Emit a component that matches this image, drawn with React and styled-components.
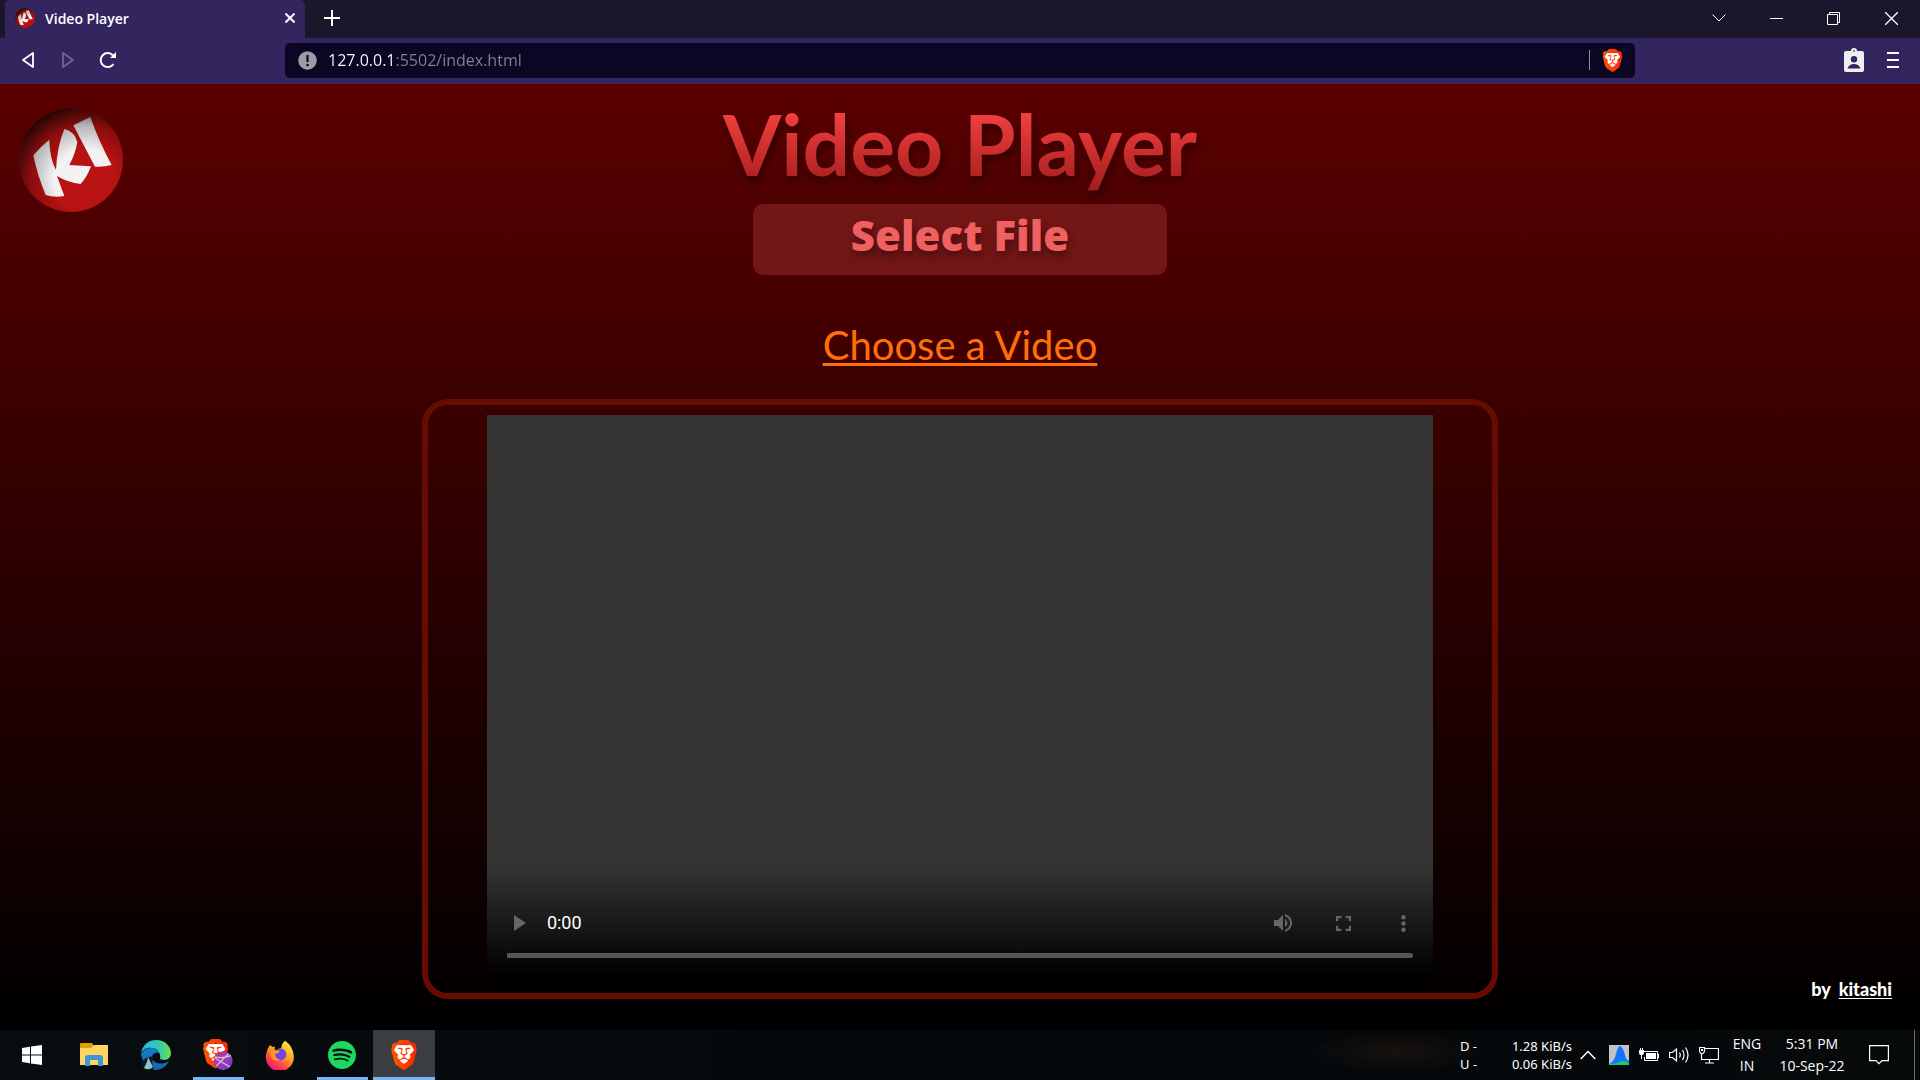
import React, { useRef } from "react";
import styled, { createGlobalStyle } from "styled-components";
import { SiBrave, SiSpotify } from "react-icons/si";

const ui = `"Open Sans", "Noto Sans", sans-serif`;

const GlobalStyle = createGlobalStyle`
  *, *::before, *::after { box-sizing: border-box; }
  body { margin: 0; background: #000; font-family: ${ui}; color: #fff; }
  button, input { font: inherit; color: inherit; border: 0; padding: 0; margin: 0; background: none; }
  svg { display: block; }
`;

const Shell = styled.div`
  display: flex;
  flex-direction: column;
  min-height: 100vh;
`;

/* Browser chrome */
const TabStrip = styled.div`
  display: flex;
  height: 38px;
  padding-left: 5px;
  background: #1a172d;
`;
const Tab = styled.div`
  display: flex;
  align-items: center;
  gap: 10px;
  width: 300px;
  padding: 0 8px 2px 10px;
  border-radius: 5px 5px 0 0;
  background: #33265f;
  font-size: 14px;
  font-weight: 600;
`;
const TabTitle = styled.span`
  flex: 1;
  white-space: nowrap;
`;
const IconButton = styled.button`
  display: flex;
  align-items: center;
  justify-content: center;
  width: ${(p) => p.$w}px;
  height: ${(p) => p.$h || 36}px;
`;
const WindowControls = styled.div`
  display: flex;
  margin-left: auto;
`;
const Toolbar = styled.div`
  display: flex;
  align-items: center;
  height: 46px;
  padding: 0 8px 2px;
  background: #33265f;
`;
const NavButtons = styled.div`
  display: flex;
  width: 277px;
`;
const AddressBar = styled.div`
  display: flex;
  align-items: center;
  gap: 11px;
  flex: 1;
  height: 35px;
  padding: 0 11px 0 13px;
  border-radius: 5px;
  background: #0c0624;
`;
const Address = styled.input`
  flex: 1;
  min-width: 0;
  height: 30px;
  font-size: 16px;
  outline: 0;
  background: linear-gradient(90deg, #fff 67px, #858093 67px);
  background-clip: text;
  -webkit-text-fill-color: transparent;
`;
const Divider = styled.span`
  width: 1px;
  height: 20px;
  background: #8d8a99;
`;
const ToolbarEnd = styled.div`
  display: flex;
  justify-content: flex-end;
  width: 277px;
`;

/* Web page */
const Page = styled.main`
  display: flex;
  flex-direction: column;
  flex: 1;
  padding-bottom: 31px;
  background: linear-gradient(#5a0000, #000);
`;
const Header = styled.header`
  display: grid;
  grid-template-columns: 1fr auto 1fr;
`;
const LogoSlot = styled.div`
  padding: 24px 0 0 19px;
`;
const Intro = styled.div`
  display: flex;
  flex-direction: column;
  align-items: center;
`;
const Title = styled.h1`
  margin: 0;
  height: 120px;
  font: 700 84px/120px Lato, sans-serif;
  background: linear-gradient(#f44 15%, #a01c1c 90%);
  background-clip: text;
  -webkit-text-fill-color: transparent;
  filter: drop-shadow(2px 5px 5px rgba(0, 0, 0, 0.4));
`;
const SelectButton = styled.button`
  width: 414px;
  height: 71px;
  padding-bottom: 10px;
  border-radius: 10px;
  background: #731616;
  color: #ef6060;
  font-size: 42px;
  font-weight: 800;
  line-height: 60px;
  text-shadow: 2px 5px 8px rgba(0, 0, 0, 0.4);
`;
const FileInput = styled.input`
  display: none;
`;
const Prompt = styled.p`
  margin: 46px 0 0;
  font: 400 40px/48px Lato, sans-serif;
  color: #ff6e0c;
  text-decoration: underline;
  text-decoration-thickness: 3px;
  text-underline-offset: 3px;
`;
const Stage = styled.section`
  display: grid;
  grid-template-columns: 1fr 56vw 1fr;
  flex: 1;
  margin-top: 30px;
`;
const Frame = styled.div`
  display: flex;
  justify-content: center;
  grid-column: 2;
  min-height: 600px;
  padding: 10px 0;
  border: 6px solid #660c00;
  border-radius: 26px;
`;
const Player = styled.div`
  display: flex;
  flex-direction: column;
  justify-content: flex-end;
  width: 89%;
  background: #333;
`;
const Controls = styled.div`
  height: 120px;
  padding: 40px 20px 0;
  background: linear-gradient(rgba(0, 0, 0, 0) 3%, #000 94%);
`;
const ControlRow = styled.div`
  display: flex;
  align-items: center;
  margin-right: -10px;
  color: #666;
`;
const Time = styled.span`
  flex: 1;
  padding-left: 14px;
  font: 400 18px/40px Roboto, sans-serif;
  color: #fff;
`;
const Timeline = styled.input`
  display: block;
  appearance: none;
  width: 100%;
  height: 5px;
  margin-top: 10px;
  border-radius: 3px;
  background: #555;
  &::-webkit-slider-thumb { appearance: none; width: 1px; height: 5px; background: #555; }
`;
const MediaButtons = styled.div`
  display: flex;
  gap: 20px;
`;
const Credit = styled.footer`
  align-self: end;
  justify-self: end;
  padding-right: 28px;
  font: 900 18px/20px Lato, sans-serif;
  a { margin-left: 4px; color: inherit; text-underline-offset: 2px; }
`;

/* Taskbar */
const Taskbar = styled.nav`
  display: flex;
  height: 50px;
  padding: 0 5px 0 1px;
  background:
    radial-gradient(ellipse 90px 20px at 1395px 22px, #17120f, transparent),
    linear-gradient(90deg, #090d0f, #04070a 60%, #070a0b);
`;
const AppButton = styled.button`
  display: flex;
  align-items: center;
  justify-content: center;
  width: 62px;
  height: 50px;
`;
const RunningApp = styled(AppButton)`
  background-image: linear-gradient(#76b5f2, #76b5f2);
  background-repeat: no-repeat;
  background-position: bottom;
  background-size: ${(p) => (p.$active ? 62 : 51)}px 3px;
  background-color: ${(p) => (p.$active ? "#3b3e40" : "transparent")};
`;
const Tray = styled.div`
  display: flex;
  align-items: center;
  margin-left: auto;
`;
const Network = styled.dl`
  display: grid;
  grid-template-columns: 50px 62px;
  margin: 0;
  font: 400 13px/18px "Noto Sans", sans-serif;
  dd, dt { margin: 0; white-space: nowrap; }
  dd { text-align: right; }
`;
const TrayButton = styled(IconButton)`
  flex: none;
`;
const TrayText = styled.button`
  width: ${(p) => p.$w}px;
  font-size: 14px;
  line-height: 22px;
  text-align: center;
  white-space: nowrap;
`;
const Line = styled.span`
  display: block;
`;
const ShowDesktop = styled.button`
  width: 1px;
  height: 50px;
  margin-left: 10px;
  background: #6d6f70;
`;

function Logo({ size, id }) {
  return (
    <svg width={size} height={size} viewBox="58 54 312 312" aria-hidden="true">
      <defs>
        <radialGradient id={id} cx="0.64" cy="0.7" r="0.76">
          <stop offset="0.4" stopColor="#000" stopOpacity="0" />
          <stop offset="0.7" stopColor="#000" stopOpacity="0.25" />
          <stop offset="1" stopColor="#000" stopOpacity="0.85" />
        </radialGradient>
      </defs>
      <circle cx="214" cy="210" r="156" fill="#b81212" />
      <g fill="#f3f1f1">
        <path d="M101 196Q122 170 149 149Q150 205 169 240Q172 170 194 117Q225 125 233 156Q227 192 209 225L274 229Q263 260 243 282Q205 278 172 258L194 318Q165 323 138 315Q113 255 101 196Z" />
        <path d="M221 106L272 81Q298 155 336 225Q312 232 286 230Z" />
      </g>
      <circle cx="214" cy="210" r="156" fill={`url(#${id})`} />
    </svg>
  );
}

function Brave({ size, badge, id }) {
  return (
    <svg width={size} height={badge ? size + 2 : size} viewBox={badge ? "2 0 24 26" : "0 0 24 24"} aria-hidden="true">
      <defs>
        <linearGradient id={id}>
          <stop stopColor="#ff5500" />
          <stop offset="1" stopColor="#ff2500" />
        </linearGradient>
        <linearGradient id={`${id}-planet`} x2="1" y2="1">
          <stop stopColor="#c43a80" />
          <stop offset="1" stopColor="#6840d8" />
        </linearGradient>
      </defs>
      <path d="M6 4h12l3 5-3 9-6 4-6-4-3-9z" fill="#fff" />
      <SiBrave x="0" y="0" size={24} style={{ fill: `url(#${id})` }} />
      {badge && (
        <g>
          <circle cx="18.200" cy="17.600" r="7.700" fill={`url(#${id}-planet)`} />
          <path d="M11.500 15.500L23.500 22.500M12.500 22L22.500 12M11.500 14.500Q18 16 24.500 13.500" fill="none" stroke="#e9b8e4" />
        </g>
      )}
    </svg>
  );
}

function Firefox() {
  return (
    <svg width="30" height="30" viewBox="0 0 24 24" aria-hidden="true">
      <defs>
        <linearGradient id="fox" x1="0.8" y1="0" x2="0.2" y2="1">
          <stop stopColor="#fff044" />
          <stop offset="0.45" stopColor="#ff9a20" />
          <stop offset="0.75" stopColor="#ff3950" />
          <stop offset="1" stopColor="#e31587" />
        </linearGradient>
      </defs>
      <path d="M16 .5Q22.500 5 23 12.500A11.200 11.200 0 1 1 1 11Q1.500 7 4 4L6 5.500Q7 5 8 5.500Q7 8 9 8.500Q12 6 13 6.500Q13 3 16 .5Z" fill="url(#fox)" />
      <circle cx="12.200" cy="11.500" r="4.800" fill="#7542e5" />
      <path d="M4 9Q7 7 12 9Q10.500 11 8 11Q8 15 12 15.500Q8 18 5 14Z" fill="#ff9820" />
    </svg>
  );
}

function Edge() {
  return (
    <svg width="30" height="30" viewBox="0 0 30 30" aria-hidden="true">
      <defs>
        <linearGradient id="edge-top">
          <stop stopColor="#2fb4ee" />
          <stop offset="0.6" stopColor="#35c8b0" />
          <stop offset="1" stopColor="#70df4c" />
        </linearGradient>
        <linearGradient id="edge-low" x2="0" y2="1">
          <stop stopColor="#1180cf" />
          <stop offset="1" stopColor="#1565b5" />
        </linearGradient>
      </defs>
      <path d="M0 13C2 4 8 0 15 0C25 0 30 7 30 14C29 20 24 21 19 19C20 15 18 9 11 8Q4 7 0 13Z" fill="url(#edge-top)" />
      <path d="M0 14Q4 7 11 8Q16 9 18 13Q12 12 11 17C11 23 20 26 28 21C25 27 20 30 14 30Q3 28 0 14Z" fill="url(#edge-low)" />
      <path d="M1 23Q5 15 14 17Q9 21 13 29L3 30Z" fill="#0b1a24" />
      <path d="M7 17L9 21L12 27Q8 31 3 28L6 22Z" fill="#8bc5ca" />
    </svg>
  );
}

function Folder() {
  return (
    <svg width="28" height="24" viewBox="0 0 28 24" aria-hidden="true">
      <path d="M0 1Q0 0 1 0H12L14 3H27V10H0Z" fill="#dfa100" />
      <path d="M0 5H11L14 2H28V22H0Z" fill="#ffd45f" />
      <path d="M5 23V15Q5 12 8 12H20Q23 12 23 15V23H18V17H10V23Z" fill="#3c96dc" />
    </svg>
  );
}

const stroke = { fill: "none", stroke: "#fff", strokeWidth: 1 };

export default function App() {
  const fileRef = useRef(null);
  return (
    <Shell>
      <GlobalStyle />
      <TabStrip>
        <Tab>
          <Logo size={20} id="fav-shade" />
          <TabTitle>Video Player</TabTitle>
          <IconButton $w={14} aria-label="Close tab">
            <svg width="10" height="10" viewBox="0 0 10 10"><path d="M.5.5l9 9M9.500.5l-9 9" {...stroke} strokeWidth="2" /></svg>
          </IconButton>
        </Tab>
        <IconButton $w={54} aria-label="New tab">
          <svg width="16" height="16" viewBox="0 0 16 16"><path d="M8 0v16M0 8h16" {...stroke} strokeWidth="2" /></svg>
        </IconButton>
        <WindowControls>
          <IconButton $w={59} aria-label="Search tabs">
            <svg width="14" height="8" viewBox="0 0 14 8"><path d="M.5.5L7 7L13.500.5" {...stroke} /></svg>
          </IconButton>
          <IconButton $w={57} aria-label="Minimize">
            <svg width="13" height="3" viewBox="0 0 13 3"><path d="M0 1.500h13" {...stroke} /></svg>
          </IconButton>
          <IconButton $w={57} aria-label="Restore">
            <svg width="13" height="13" viewBox="0 0 13 13"><path d="M.5 2.500h10v10H.5zM2.500 2.500V.5h10v10h-2" {...stroke} /></svg>
          </IconButton>
          <IconButton $w={58} aria-label="Close window">
            <svg width="13" height="13" viewBox="0 0 13 13"><path d="M0 0l13 13M13 0L0 13" {...stroke} strokeWidth="1.300" /></svg>
          </IconButton>
        </WindowControls>
      </TabStrip>
      <Toolbar>
        <NavButtons>
          <IconButton $w={40} aria-label="Back">
            <svg width="14" height="18" viewBox="0 0 14 18"><path d="M12 2v14L2 9z" {...stroke} strokeWidth="1.800" strokeLinejoin="round" /></svg>
          </IconButton>
          <IconButton $w={40} aria-label="Forward">
            <svg width="14" height="18" viewBox="0 0 14 18"><path d="M2 2v14L12 9z" {...stroke} stroke="#70668f" strokeWidth="1.800" strokeLinejoin="round" /></svg>
          </IconButton>
          <IconButton $w={40} aria-label="Reload">
            <svg width="18" height="18" viewBox="0 0 18 18"><path d="M14.500 13A7 7 0 1 1 14 4.500" {...stroke} strokeWidth="2" /><path d="M17 1v6h-6z" fill="#fff" /></svg>
          </IconButton>
        </NavButtons>
        <AddressBar>
          <svg width="19" height="19" viewBox="0 0 19 19"><circle cx="9.500" cy="9.500" r="9.300" fill="#9a9ca4" /><path d="M9.500 4v7" stroke="#0c0624" strokeWidth="2.200" /><circle cx="9.500" cy="14" r="1.300" fill="#0c0624" /></svg>
          <Address aria-label="Address" defaultValue="127.0.0.1:5502/index.html" />
          <Divider />
          <Brave size={23} id="shield-bar" />
        </AddressBar>
        <ToolbarEnd>
          <IconButton $w={40} aria-label="Profile">
            <svg width="20" height="24" viewBox="0 0 20 24"><path fillRule="evenodd" d="M2 3h5a3 3 0 0 1 6 0h5q2 0 2 2v17q0 2-2 2H2q-2 0-2-2V5q0-2 2-2zM9 3.500h2v-1H9zM10 8a3.200 3.200 0 1 0 0 6.400A3.200 3.200 0 0 0 10 8zM3.500 20.500h13Q15 16 10 16T3.500 20.500z" fill="#efeff1" /></svg>
          </IconButton>
          <IconButton $w={38} aria-label="Menu">
            <svg width="12" height="18" viewBox="0 0 12 18"><path d="M0 2h12M0 9h12M0 16h12" {...stroke} strokeWidth="2" /></svg>
          </IconButton>
        </ToolbarEnd>
      </Toolbar>

      <Page>
        <Header>
          <LogoSlot><Logo size={104} id="logo-shade" /></LogoSlot>
          <Intro>
            <Title>Video Player</Title>
            <SelectButton type="button" onClick={() => fileRef.current.click()}>Select File</SelectButton>
            <FileInput ref={fileRef} type="file" accept="video/*" aria-label="Video file" />
            <Prompt>Choose a Video</Prompt>
          </Intro>
        </Header>
        <Stage>
          <Frame>
            <Player>
              <Controls>
                <ControlRow>
                  <IconButton $w={26} $h={40} aria-label="Play">
                    <svg width="12" height="16" viewBox="0 0 12 16"><path d="M0 0v16l12-8z" fill="currentColor" /></svg>
                  </IconButton>
                  <Time>0:00</Time>
                  <MediaButtons>
                    <IconButton $w={40} $h={40} aria-label="Mute">
                      <svg width="20" height="18" viewBox="3 3 18 18" fill="currentColor"><path d="M3 9v6h4l5 5V4L7 9H3zm13.500 3c0-1.770-1.020-3.290-2.500-4.030v8.050c1.480-.73 2.500-2.250 2.500-4.020zM14 3.230v2.060c2.890.86 5 3.540 5 6.710s-2.110 5.850-5 6.710v2.060c4.010-.91 7-4.490 7-8.770s-2.990-7.860-7-8.770z" /></svg>
                    </IconButton>
                    <IconButton $w={40} $h={40} aria-label="Full screen">
                      <svg width="15" height="15" viewBox="5 5 14 14" fill="currentColor"><path d="M7 14H5v5h5v-2H7v-3zm-2-4h2V7h3V5H5v5zm12 7h-3v2h5v-5h-2v3zM14 5v2h3v3h2V5h-5z" /></svg>
                    </IconButton>
                    <IconButton $w={40} $h={40} aria-label="More options">
                      <svg width="5" height="17" viewBox="0 0 5 17" fill="currentColor"><circle cx="2.500" cy="2.300" r="2.200" /><circle cx="2.500" cy="8.500" r="2.200" /><circle cx="2.500" cy="14.700" r="2.200" /></svg>
                    </IconButton>
                  </MediaButtons>
                </ControlRow>
                <Timeline type="range" min="0" max="100" defaultValue="0" aria-label="Seek" />
              </Controls>
            </Player>
          </Frame>
          <Credit>by <a href="#kitashi">kitashi</a></Credit>
        </Stage>
      </Page>

      <Taskbar>
        <AppButton aria-label="Start">
          <svg width="20" height="20" viewBox="0 0 20 20" fill="#fff"><path d="M0 3l8-1.200V9.500H0zM9 1.600L20 0v9.500H9zM0 10.500h8v7.700L0 17zM9 10.500h11V20L9 18.400z" /></svg>
        </AppButton>
        <AppButton aria-label="File Explorer"><Folder /></AppButton>
        <AppButton aria-label="Edge"><Edge /></AppButton>
        <RunningApp aria-label="Brave Beta"><Brave size={30} badge id="shield-beta" /></RunningApp>
        <AppButton aria-label="Firefox"><Firefox /></AppButton>
        <RunningApp aria-label="Spotify"><SiSpotify size={28} color="#1ed760" /></RunningApp>
        <RunningApp $active aria-label="Brave"><Brave size={30} id="shield-task" /></RunningApp>
        <Tray>
          <Network>
            <dt>D -</dt><dd>1.28 KiB/s</dd>
            <dt>U -</dt><dd>0.06 KiB/s</dd>
          </Network>
          <TrayButton $w={32} aria-label="Show hidden icons">
            <svg width="16" height="10" viewBox="0 0 16 10"><path d="M.7 9L8 1.500L15.300 9" {...stroke} strokeWidth="1.500" /></svg>
          </TrayButton>
          <TrayButton $w={30} aria-label="Network graph">
            <svg width="20" height="20" viewBox="0 0 20 20"><path d="M0 0h20v20H0z" fill="#c3c1c4" /><path d="M0 19Q5 17 7 9Q9 1 11 1Q14 2 16 10Q17 15 20 16V20H0z" fill="#1673ff" /><path d="M0 19Q7 19 11 16.500Q16 15 20 18V20H0z" fill="#10d46b" /></svg>
          </TrayButton>
          <TrayButton $w={30} aria-label="Battery">
            <svg width="20" height="14" viewBox="0 0 20 14"><path d="M5 3.500h13.500v9H5.500V9M18.500 6h1v4h-1" {...stroke} /><path d="M7 5h10v6H7zM0 2h5v3q0 2-2 2v4H2V7Q0 7 0 5zM1 0h1v2H1zM3 0h1v2H3z" fill="#fff" /></svg>
          </TrayButton>
          <TrayButton $w={30} aria-label="Volume">
            <svg width="20" height="18" viewBox="0 0 20 18"><path d="M.5 6.500h3L7.500 3v12l-4-3.500h-3zM10.500 6.500q1.500 2.500 0 5M13.500 4q3 5 0 10M16.500 1.500q5 7.500 0 15" {...stroke} strokeWidth="1.200" /></svg>
          </TrayButton>
          <TrayButton $w={30} aria-label="Ethernet">
            <svg width="20" height="17" viewBox="0 0 20 17"><path d="M5.500 1.500h14v11h-17V6.500M.5.500h5v4L4 6.500H2L.5 4.500zM10.500 12.500v3M6 16h9" {...stroke} strokeWidth="1.200" /><path d="M2 2h2v2H2z" fill="#fff" /></svg>
          </TrayButton>
          <TrayText $w={46}><Line>ENG</Line><Line>IN</Line></TrayText>
          <TrayText $w={84}><Line>5:31 PM</Line><Line>10-Sep-22</Line></TrayText>
          <TrayButton $w={50} aria-label="Notifications">
            <svg width="20" height="20" viewBox="0 0 20 20"><path d="M.6.600h18.800v15H13l-3 3-3-3H.600z" {...stroke} strokeWidth="1.200" /></svg>
          </TrayButton>
          <ShowDesktop aria-label="Show desktop" />
        </Tray>
      </Taskbar>
    </Shell>
  );
}
